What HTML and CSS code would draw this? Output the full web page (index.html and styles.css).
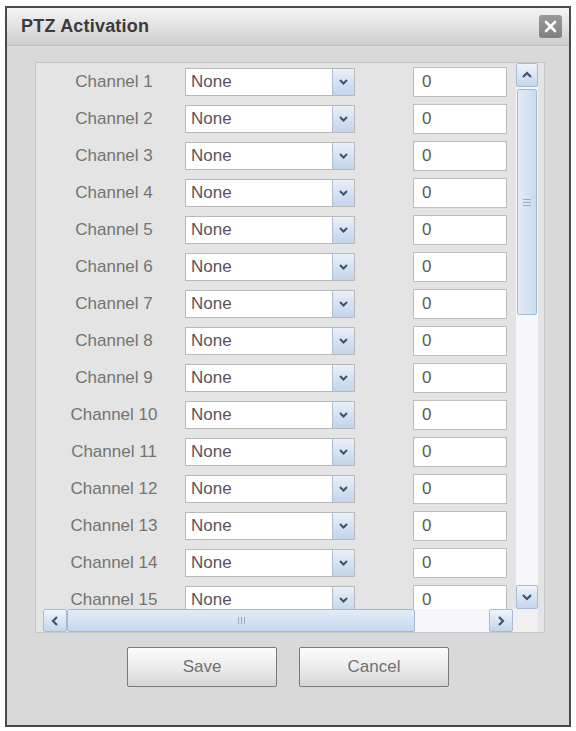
FILE: index.html
```html
<!DOCTYPE html>
<html lang="en">
<head>
  <meta charset="UTF-8" />
  <meta name="viewport" content="width=device-width, initial-scale=1.0" />
  <title>PTZ Activation</title>
  <link rel="stylesheet" href="styles.css">
</head>
<body>
  <div class="dialog">
    <div class="titlebar">
      <span class="title">PTZ Activation</span>
      <span class="close">
        <svg width="13" height="13" viewBox="0 0 13 13"><path d="M2 2 L11 11 M11 2 L2 11" stroke="#fff" stroke-width="2.6" stroke-linecap="round"/></svg>
      </span>
    </div>

    <div class="panel">
      <div class="panel-body">
        <div class="rows" id="rows"></div>
        <div class="vscroll">
          <div class="sbtn">
            <svg width="12" height="8" viewBox="0 0 12 8"><path d="M2 6 L6 2 L10 6" fill="none" stroke="#3d5272" stroke-width="2.2"/></svg>
          </div>
          <div class="vtrack">
            <div class="vthumb"><span class="grip-h"></span></div>
          </div>
          <div class="sbtn">
            <svg width="12" height="8" viewBox="0 0 12 8"><path d="M2 2 L6 6 L10 2" fill="none" stroke="#3d5272" stroke-width="2.2"/></svg>
          </div>
        </div>
      </div>
      <div class="hscroll">
        <div class="sbtn hbtn">
          <svg width="8" height="12" viewBox="0 0 8 12"><path d="M6 2 L2 6 L6 10" fill="none" stroke="#3d5272" stroke-width="2.2"/></svg>
        </div>
        <div class="hthumb"><span class="grip-v"></span></div>
        <div class="htrack"></div>
        <div class="sbtn hbtn">
          <svg width="8" height="12" viewBox="0 0 8 12"><path d="M2 2 L6 6 L2 10" fill="none" stroke="#3d5272" stroke-width="2.2"/></svg>
        </div>
        <div class="corner"></div>
      </div>
    </div>

    <div class="buttons">
      <button class="btn">Save</button>
      <button class="btn">Cancel</button>
    </div>
  </div>

  <script>
    const rows = document.getElementById('rows');
    for (let i = 1; i <= 15; i++) {
      const row = document.createElement('div');
      row.className = 'row';
      row.innerHTML =
        '<span class="label">Channel ' + i + '</span>' +
        '<span class="select"><span class="select-text">None</span>' +
        '<span class="select-arrow"><svg width="11" height="8" viewBox="0 0 11 8"><path d="M2 2 L5.5 5.5 L9 2" fill="none" stroke="#3d5272" stroke-width="2"/></svg></span></span>' +
        '<span class="field">0</span>';
      rows.appendChild(row);
    }
  </script>
</body>
</html>
```

FILE: styles.css
```css
body {
  margin: 0;
  background-color: #fff;
  font-family: "Liberation Sans", Arial, sans-serif;
}
.dialog {
  margin: 6px 0 0 5px;
  width: 562px;
  height: 717px;
  border: 2px solid #4a4a4a;
  background-color: #d9d9d9;
  display: flex;
  flex-direction: column;
}
.titlebar {
  height: 37px;
  display: flex;
  align-items: center;
  justify-content: space-between;
  padding: 0 7px 0 14px;
  background: linear-gradient(#f4f4f4, #e2e2e2 50%, #cdcdcd);
  border-bottom: 1px solid #c4c4c4;
}
.title {
  font-size: 18px;
  font-weight: bold;
  color: #3a3a3a;
  letter-spacing: 0.2px;
}
.close {
  width: 23px;
  height: 23px;
  border-radius: 3px;
  background: linear-gradient(#9a9a9a, #808080);
  display: flex;
  align-items: center;
  justify-content: center;
}
.panel {
  margin: 16px 24px 0 28px;
  height: 569px;
  border: 1px solid #c6c6c6;
  background-color: #e4e4e4;
  padding: 0 6px 0 7px;
  display: flex;
  flex-direction: column;
}
.panel-body {
  height: 546px;
  display: flex;
}
.rows {
  flex: 1;
  overflow: hidden;
}
.row {
  height: 37px;
  display: flex;
  align-items: center;
  font-size: 17px;
}
.label {
  width: 142px;
  text-align: center;
  color: #737373;
}
.select {
  width: 170px;
  height: 28px;
  box-sizing: border-box;
  border: 1px solid #b9b9b9;
  background-color: #fff;
  display: flex;
  align-items: center;
}
.select-text {
  flex: 1;
  padding-left: 5px;
  color: #5c525c;
}
.select-arrow {
  width: 22px;
  height: 26px;
  box-sizing: border-box;
  border-left: 1px solid #aebfd3;
  background: linear-gradient(#e9f0f8, #c3d4ea);
  display: flex;
  align-items: center;
  justify-content: center;
}
.field {
  margin-left: 58px;
  width: 94px;
  height: 30px;
  box-sizing: border-box;
  border: 1px solid #bdbdbd;
  background-color: #fff;
  padding-left: 8px;
  line-height: 28px;
  color: #5a5a5a;
}
.vscroll {
  width: 22px;
  display: flex;
  flex-direction: column;
  background-color: #f1f1f1;
}
.sbtn {
  height: 24px;
  box-sizing: border-box;
  border: 1px solid #a9bbd2;
  border-radius: 2px;
  background: linear-gradient(#eef4fb, #c4d6ec);
  display: flex;
  align-items: center;
  justify-content: center;
}
.vtrack {
  flex: 1;
  padding: 2px 1px;
  background-color: #f5f7fa;
}
.vthumb {
  height: 226px;
  box-sizing: border-box;
  border: 1px solid #a4b8d2;
  border-radius: 2px;
  background: linear-gradient(90deg, #e3ecf7, #c9dbf0);
  display: flex;
  align-items: center;
  justify-content: center;
}
.grip-h {
  width: 8px;
  height: 7px;
  background: repeating-linear-gradient(#9aa9bb 0 1px, transparent 1px 3px);
}
.hscroll {
  height: 23px;
  display: flex;
  background-color: #f5f7fa;
}
.hbtn {
  width: 24px;
  height: 23px;
}
.hthumb {
  width: 348px;
  box-sizing: border-box;
  border: 1px solid #a4b8d2;
  border-radius: 2px;
  background: linear-gradient(#e3ecf7, #c6d8ef);
  display: flex;
  align-items: center;
  justify-content: center;
}
.grip-v {
  width: 7px;
  height: 7px;
  background: repeating-linear-gradient(90deg, #9aa9bb 0 1px, transparent 1px 3px);
}
.htrack {
  flex: 1;
}
.corner {
  width: 25px;
  background-color: #f0f0f0;
}
.buttons {
  margin-top: 14px;
  display: flex;
  justify-content: center;
  gap: 22px;
}
.btn {
  width: 150px;
  height: 40px;
  border: 1px solid #7a7a7a;
  border-radius: 2px;
  background: linear-gradient(#fdfdfd, #ececec 50%, #d6d6d6);
  font-family: "Liberation Sans", Arial, sans-serif;
  font-size: 17px;
  color: #707070;
}
```
